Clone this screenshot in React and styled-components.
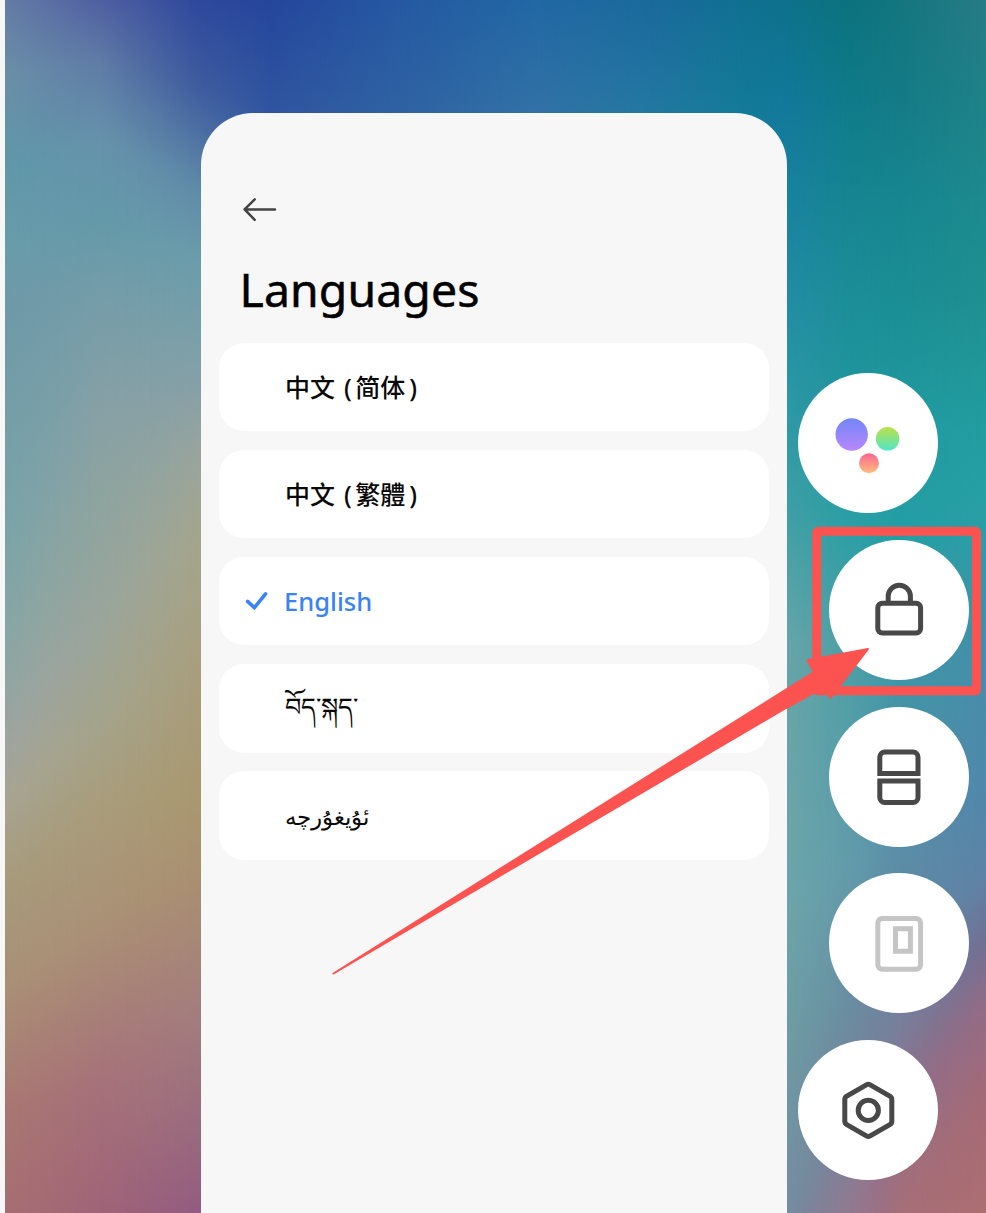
import React from "react";
import styled, { createGlobalStyle, css } from "styled-components";

const GlobalStyle = createGlobalStyle`
  *, *::before, *::after { box-sizing: border-box; }
  body { margin: 0; background: #f7f7f7; }
`;

const Screen = styled.main`
  position: relative;
  width: 986px;
  height: 1213px;
  padding-left: 5px;
  overflow: hidden;
  background: #f7f7f7;
  font-family: "Noto Sans", "Noto Sans CJK SC", sans-serif;
`;

const Desktop = styled.div`
  position: relative;
  display: flex;
  height: 100%;
  padding-left: 195.5px;
  isolation: isolate;
`;

const Wallpaper = styled.div`
  position: absolute;
  inset: 0;
  z-index: -1;
  display: grid;
`;

const Shade = styled.div`
  grid-area: 1 / 1;
  background: linear-gradient(to bottom, ${(p) => p.$stops});
  ${(p) =>
    p.$from !== undefined &&
    css`
      mask-image: linear-gradient(to right, transparent ${p.$from}px, #000 ${p.$to}px);
    `}
`;

const Panel = styled.section`
  width: 586.5px;
  margin-top: 112.7px;
  padding: 84px 18px 0;
  border-radius: 52px 52px 0 0;
  background: #f7f7f7;
`;

const BackButton = styled.button`
  display: block;
  width: 36px;
  height: 26px;
  margin-left: 23.5px;
  padding: 0;
  border: 0;
  background: none;
  color: #444;
`;

const Title = styled.h1`
  margin: 33px 0 18.9px 21px;
  height: 68px;
  font-size: 46.4px;
  line-height: 67px;
  font-weight: 400;
  letter-spacing: 0.1px;
  color: #000;
  -webkit-text-stroke: 0.5px #000;
`;

const LanguageList = styled.ul`
  display: flex;
  flex-direction: column;
  gap: 18.4px;
  margin: 0;
  padding: 0;
  list-style: none;
`;

const LanguageRow = styled.li`
  display: flex;
  align-items: center;
  height: 88.7px;
  padding-left: 26.5px;
  border-radius: 25px;
  background: #fff;
  color: ${(p) => (p.$selected ? "#3a82f7" : "#0a0a0a")};
`;

const CheckSlot = styled.span`
  display: flex;
  width: 40px;
`;

const LanguageName = styled.span`
  font-size: ${(p) => p.$size}px;
  font-weight: ${(p) => p.$weight};
  line-height: 40px;
  white-space: nowrap;
  word-spacing: 2.5px;
  padding-top: ${(p) => p.$lower || 0}px;
  padding-bottom: ${(p) => p.$raise || 0}px;
  margin-left: ${(p) => (p.$selected ? -1 : 0)}px;
`;

const Variant = styled.span`
  padding: 0 4px 0 3.5px;
`;

const Dock = styled.nav`
  display: flex;
  flex-direction: column;
  gap: 26.8px;
  padding: 373px 0 0 11px;
`;

const RoundButton = styled.button`
  display: grid;
  place-items: center;
  width: 140px;
  height: 140px;
  margin-left: ${(p) => (p.$shifted ? 31 : 0)}px;
  padding: 0;
  border: 0;
  border-radius: 50%;
  background: #fff;
  color: ${(p) => (p.$muted ? "#c5c5c5" : "#484848")};
`;

const Annotation = styled.svg`
  position: absolute;
  inset: 0;
  pointer-events: none;
`;

// Each anchor is a column of the wallpaper: its x and the [y, colour] stops down it.
const leftAnchors = [
  { x: 0, stops: [[0, "#647ca6"], [75, "#6b8fa8"], [170, "#5f98a9"], [250, "#6a9cab"], [310, "#6f99a8"], [540, "#7ba4a8"], [650, "#8aa6a4"], [740, "#9ea4a0"], [800, "#a8a492"], [890, "#a79a7b"], [990, "#a98f77"], [1110, "#a97672"], [1213, "#a76e72"]] },
  { x: 95, stops: [[0, "#505fa2"], [60, "#5f7ba6"], [140, "#6692ab"], [215, "#6399a9"], [280, "#729ca9"], [400, "#86a0a6"], [500, "#8ea49f"], [620, "#9aa59c"], [720, "#a4a48c"], [800, "#a99d7c"], [925, "#aa9176"], [1080, "#a6727a"], [1213, "#a06478"]] },
  { x: 195, stops: [[0, "#2e489c"], [90, "#3f5c9f"], [190, "#5f8aa8"], [260, "#6c9cab"], [320, "#769fa9"], [390, "#87a0a7"], [445, "#97a49f"], [520, "#a3a68f"], [650, "#a89f80"], [800, "#a9986f"], [880, "#aa8f72"], [1000, "#a47f7d"], [1213, "#935c80"]] },
];

const topAnchors = [
  { from: 195, to: 265, stops: "#25469c 0px, #3055a0 113px" },
  { from: 265, to: 395, stops: "#2559a2 0px, #2f62a3 113px" },
  { from: 395, to: 535, stops: "#2168a4 0px, #3272a6 113px" },
  { from: 535, to: 645, stops: "#1a6a9c 0px, #2378a2 113px" },
  { from: 645, to: 735, stops: "#117092 0px, #147b99 113px" },
];

const rightAnchors = [
  { x: 782, stops: [[0, "#0d728b"], [100, "#12789a"], [220, "#1b84a0"], [330, "#268fa5"], [430, "#309aa5"], [520, "#419fa5"], [640, "#66a5a8"], [900, "#6ca5aa"], [1040, "#6e9ba4"], [1213, "#748da0"], [1330, "#8f7a94"], [1500, "#a66f78"], [1700, "#ac6f72"]] },
  { x: 845, stops: [[0, "#0b727d"], [100, "#0f7b8a"], [200, "#178592"], [300, "#1c8e98"], [430, "#21989f"], [520, "#2a9fa5"], [650, "#4c9fa6"], [870, "#639bab"], [990, "#688fa2"], [1120, "#7b8098"], [1220, "#937990"], [1400, "#a66f78"], [1600, "#ac6f72"]] },
  { x: 895, stops: [[0, "#14767f"], [100, "#147b86"], [200, "#178690"], [300, "#1a8e94"], [430, "#219ba0"], [520, "#239ea4"], [650, "#3a97a7"], [830, "#588fa8"], [930, "#6488a4"], [1030, "#7a7e9a"], [1120, "#966d86"], [1210, "#a66f79"], [1300, "#ac6f72"]] },
  { x: 981, stops: [[0, "#277b86"], [100, "#1f8289"], [200, "#1d8a8e"], [300, "#1f9092"], [430, "#239da0"], [520, "#299fa5"], [650, "#448fa9"], [780, "#4f88ab"], [880, "#5f82a5"], [940, "#716f94"], [1000, "#926c86"], [1100, "#a46a76"], [1213, "#ac6f72"]] },
];

const channels = (hex) => [1, 3, 5].map((i) => parseInt(hex.slice(i, i + 2), 16));
const mix = (a, b, t) => a + (b - a) * t;

function blendColumns(anchors, from) {
  const parts = 8;
  const columns = [];
  let previous = from;
  anchors.forEach((a, i) => {
    const b = anchors[i + 1];
    const steps = b ? parts : 1;
    for (let k = 0; k < steps; k++) {
      const t = k / parts;
      const x = b ? mix(a.x, b.x, t) : a.x;
      const stops = a.stops
        .map(([y, colour], n) => {
          const [y2, colour2] = b ? b.stops[n] : [y, colour];
          const to = channels(colour2);
          const rgb = channels(colour).map((c, m) => mix(c, to[m], t).toFixed(1));
          return `rgb(${rgb.join(", ")}) ${mix(y, y2, t).toFixed(1)}px`;
        })
        .join(", ");
      columns.push({ from: previous, to: x, stops });
      previous = x;
    }
  });
  return columns;
}

const shades = [
  ...blendColumns(leftAnchors),
  ...topAnchors,
  ...blendColumns(rightAnchors, 735),
];

const languages = [
  { name: "中文", variant: "简体", lang: "zh-Hans", size: 25, weight: 500 },
  { name: "中文", variant: "繁體", lang: "zh-Hant", size: 25, weight: 500 },
  { name: "English", lang: "en", size: 25.5, weight: 500, selected: true },
  { name: "བོད་སྐད་", lang: "bo", size: 25.5, weight: 400, raise: 4 },
  { name: "ئۇيغۇرچە", lang: "ug", size: 22.6, weight: 400, lower: 4 },
];

const BackIcon = () => (
  <svg width="36" height="26" viewBox="0 0 36 26" fill="none" stroke="currentColor" strokeWidth="2.5" strokeLinecap="round" strokeLinejoin="round">
    <path d="M33 12.4H2.6M12.7 2.4 2.6 12.4 12.7 22.8" />
  </svg>
);

const CheckIcon = () => (
  <svg width="24" height="20" viewBox="0 0 24 20" fill="none" stroke="currentColor" strokeWidth="3.6" strokeLinecap="round" strokeLinejoin="miter">
    <path d="M2.6 10.4 9.4 16.7 20.6 2.9" />
  </svg>
);

const DotsIcon = () => (
  <svg width="140" height="140" viewBox="0 0 140 140">
    <defs>
      <linearGradient id="violet" x2="0" y2="1"><stop stopColor="#7186f8" /><stop offset="1" stopColor="#b887fb" /></linearGradient>
      <linearGradient id="lime" x2="0" y2="1"><stop stopColor="#bde047" /><stop offset="1" stopColor="#50e6c8" /></linearGradient>
      <linearGradient id="coral" x2="0" y2="1"><stop stopColor="#fb6492" /><stop offset="1" stopColor="#ffbd7c" /></linearGradient>
    </defs>
    <circle cx="53.7" cy="61.5" r="16.2" fill="url(#violet)" />
    <circle cx="89.6" cy="65.8" r="11.8" fill="url(#lime)" />
    <circle cx="71" cy="90.2" r="10" fill="url(#coral)" />
  </svg>
);

const LockIcon = () => (
  <svg width="140" height="140" viewBox="0 0 140 140" fill="none" stroke="currentColor" strokeWidth="5">
    <rect x="48.8" y="63.2" width="42.8" height="29.9" rx="4.5" />
    <path d="M59.2 63V56.3a11.1 11.1 0 0 1 22.2 0V63" />
  </svg>
);

const SplitIcon = () => (
  <svg width="140" height="140" viewBox="0 0 140 140" fill="none" stroke="currentColor" strokeWidth="5">
    <path d="M50.8 66.4V50a5 5 0 0 1 5-5H84a5 5 0 0 1 5 5V66.4ZM50.8 73.9V90.5a5 5 0 0 0 5 5H84a5 5 0 0 0 5-5V73.9Z" />
  </svg>
);

const FloatingIcon = () => (
  <svg width="140" height="140" viewBox="0 0 140 140" fill="none" stroke="currentColor" strokeWidth="5">
    <rect x="48.8" y="45.4" width="42.8" height="50.8" rx="4.5" />
    <path d="M66.5 55.7H81.4V78.2H66.5Z" />
  </svg>
);

const SettingsIcon = () => (
  <svg width="140" height="140" viewBox="0 0 140 140" fill="none" stroke="currentColor" strokeWidth="5" strokeLinejoin="round">
    <path d="M68.8 44.6Q70.3 43.8 71.8 44.6L91.8 56.1Q93.8 57.3 93.8 59.5V81.2Q93.8 83.4 91.8 84.6L71.8 96.1Q70.3 96.9 68.8 96.1L48.8 84.6Q46.8 83.4 46.8 81.2V59.5Q46.8 57.3 48.8 56.1Z" />
    <circle cx="70.3" cy="70.4" r="10.1" />
  </svg>
);

const actions = [
  { label: "Optimize", Icon: DotsIcon },
  { label: "Lock", Icon: LockIcon, shifted: true },
  { label: "Split screen", Icon: SplitIcon, shifted: true },
  { label: "Floating window", Icon: FloatingIcon, shifted: true, muted: true },
  { label: "Settings", Icon: SettingsIcon },
];

export default function App() {
  return (
    <Screen>
      <GlobalStyle />
      <Desktop>
        <Wallpaper>
          {shades.map((s) => (
            <Shade key={s.to} $stops={s.stops} $from={s.from} $to={s.to} />
          ))}
        </Wallpaper>
        <Panel>
          <BackButton aria-label="Back"><BackIcon /></BackButton>
          <Title>Languages</Title>
          <LanguageList>
            {languages.map((l) => (
              <LanguageRow key={l.lang} $selected={l.selected}>
                <CheckSlot>{l.selected && <CheckIcon />}</CheckSlot>
                <LanguageName lang={l.lang} $size={l.size} $weight={l.weight} $raise={l.raise} $lower={l.lower} $selected={l.selected}>
                  {l.name}
                  {l.variant && <> (<Variant>{l.variant}</Variant>)</>}
                </LanguageName>
              </LanguageRow>
            ))}
          </LanguageList>
        </Panel>
        <Dock>
          {actions.map(({ label, Icon, shifted, muted }) => (
            <RoundButton key={label} aria-label={label} $shifted={shifted} $muted={muted}>
              <Icon />
            </RoundButton>
          ))}
        </Dock>
      </Desktop>
      <Annotation width="986" height="1213" viewBox="0 0 986 1213">
        <rect x="816.7" y="531.3" width="159.8" height="159.5" rx="1" fill="none" stroke="#fc5351" strokeWidth="9" strokeLinejoin="round" />
        <path d="M333.5 973.5 786 689.5 814 672 807.5 660.3 868 649 830.5 698 824 687 786 708Z" fill="#fc5351" stroke="#fc5351" strokeWidth="2" strokeLinejoin="round" />
      </Annotation>
    </Screen>
  );
}
